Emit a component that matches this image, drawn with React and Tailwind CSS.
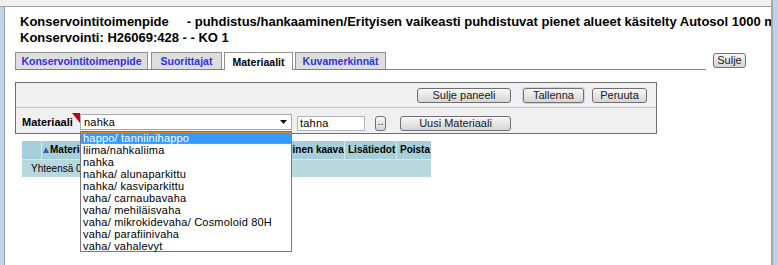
export default function App() {
  const items = [
    "happo/ tanniinihappo",
    "liima/nahkaliima",
    "nahka",
    "nahka/ alunaparkittu",
    "nahka/ kasviparkittu",
    "vaha/ carnaubavaha",
    "vaha/ mehiläisvaha",
    "vaha/ mikrokidevaha/ Cosmoloid 80H",
    "vaha/ parafiinivaha",
    "vaha/ vahalevyt",
  ];
  const btn =
    "h-[15px] rounded-[3px] border border-[#707070] bg-gradient-to-b from-[#f7f7f7] to-[#d6d6d6] text-[11px] leading-[13px] text-[#1a1a1a] flex items-center justify-center shrink-0";
  const tab =
    "h-[17px] border border-b-0 border-[#909090] bg-[#dedede] text-[10.5px] leading-[16px] font-bold text-[#3030e8] flex items-center justify-center shrink-0";
  return (
    <div className="w-[778px] h-[265px] flex bg-white overflow-hidden font-['Liberation_Sans',Arial,sans-serif] text-black">
      <div className="flex-1 flex flex-col min-w-0">
        <div className="h-[7px] bg-[#f0f0f0] border-b border-[#a0a0a0] shrink-0" />
        <div className="flex-1 flex min-h-0">
          <div className="w-[5px] bg-[#bcd3ec] border-r border-[#a0a0a0] shrink-0" />
          <div className="flex-1 min-w-0 bg-white overflow-hidden">
            {/* Title */}
            <div className="pt-[7px] pl-[15px] text-[13px] leading-[16px] font-bold whitespace-nowrap">
              <div>
                Konservointitoimenpide
                <span className="ml-[18px]">- puhdistus/hankaaminen/Erityisen vaikeasti puhdistuvat pienet alueet käsitelty Autosol 1000 mukaisesti</span>
              </div>
              <div>Konservointi: H26069:428 - - KO 1</div>
            </div>

            {/* Tabs row */}
            <div className="mt-[6px] ml-[10px] flex items-start">
              <div className="w-[691px] h-[18px] border-b border-[#808080] flex items-end gap-[2px]">
                <div className={tab + " w-[133px] mr-[1px]"}>Konservointitoimenpide</div>
                <div className={tab + " w-[71px]"}>Suorittajat</div>
                <div className="h-[18px] mb-[-1px] w-[69px] border border-b-0 border-[#909090] bg-white text-[10.5px] leading-[16px] font-bold text-black flex items-start pt-[1px] justify-center shrink-0">
                  Materiaalit
                </div>
                <div className={tab + " w-[91px]"}>Kuvamerkinnät</div>
              </div>
              <div className={btn + " w-[33px] ml-[7px] mt-[1px]"}>Sulje</div>
            </div>

            {/* Panel */}
            <div className="mt-[12px] ml-[10px] w-[642px] border border-[#707070] bg-[#f0f0f0]">
              <div className="h-[25px] border-b border-[#c4c4c4] flex items-center justify-end pr-[9px]">
                <div className={btn + " w-[94px]"}>Sulje paneeli</div>
                <div className={btn + " w-[61px] ml-[12px] border-[#3c7fb1] shadow-[0_0_0_1px_#b8dcf2]"}>Tallenna</div>
                <div className={btn + " w-[55px] ml-[8px]"}>Peruuta</div>
              </div>
              <div className="h-[25px] flex items-start pl-[6px]">
                <div className="mt-[8px] text-[11px] leading-[13px] font-bold w-[50px] shrink-0">Materiaali</div>
                <svg className="mt-[5px] shrink-0" width="8" height="10" viewBox="0 0 8 10">
                  <polygon points="0,0 8,0 8,10" fill="#c00018" />
                </svg>
                <div className="relative mt-[6px] shrink-0">
                  <div className="w-[212px] h-[16px] border border-[#a5acb5] bg-white flex items-center justify-between pl-[3px] pr-[4px] text-[11px] tracking-[0.2px]">
                    <span>nahka</span>
                    <svg width="7" height="4" viewBox="0 0 7 4">
                      <polygon points="0,0 7,0 3.5,4" fill="#111" />
                    </svg>
                  </div>
                  <div className="absolute z-10 left-0 top-[17px] w-[212px] h-[121px] border border-[#7a7a7a] bg-white">
                    {items.map((it, i) => (
                      <div
                        key={it}
                        className={
                          "h-[12px] leading-[12px] text-[11px] tracking-[0.2px] pl-[2px] whitespace-nowrap " +
                          (i === 0 ? "bg-[#3399ff] text-white outline-1 outline-dotted outline-[#d89040] -outline-offset-1" : "text-black")
                        }
                      >
                        {it}
                      </div>
                    ))}
                  </div>
                </div>
                <div className="mt-[8px] ml-[5px] w-[68px] h-[15px] border border-[#b4b4b4] bg-white text-[11px] leading-[13px] pl-[2px] tracking-[0.2px] shrink-0">
                  tahna
                </div>
                <div className={btn + " mt-[8px] ml-[10px] w-[11px] leading-[9px] items-end pb-[2px]"}>..</div>
                <div className={btn + " mt-[8px] ml-[14px] w-[111px]"}>Uusi Materiaali</div>
              </div>
            </div>

            {/* Table */}
            <div className="mt-[7px] ml-[17px] w-[409px] bg-[#d2e8ec] flex flex-col gap-[1px]">
              <div className="h-[18px] flex gap-[1px] text-[10px] font-bold leading-[18px]">
                <div className="w-[19px] bg-[#a7cfd9]" />
                <div className="w-[211px] bg-[#a7cfd9] flex items-center pl-[1px]">
                  <svg className="mr-[1px]" width="6" height="6" viewBox="0 0 6 6">
                    <polygon points="3,0 6,6 0,6" fill="#2f5fb8" />
                  </svg>
                  Materiaali
                </div>
                <div className="w-[90px] bg-[#a7cfd9] pl-[3px] whitespace-nowrap overflow-hidden">Kemiallinen kaava</div>
                <div className="w-[51px] bg-[#a7cfd9] pl-[3px]">Lisätiedot</div>
                <div className="w-[34px] bg-[#a7cfd9] pl-[3px]">Poista</div>
              </div>
              <div className="h-[17px] bg-[#b8d8de] text-[10px] leading-[17px] pl-[9px]">Yhteensä 0</div>
            </div>
          </div>
        </div>
      </div>
      <div className="w-[7px] bg-[#bcd3ec] border-l-2 border-[#a8a8a8] shrink-0" />
    </div>
  );
}
